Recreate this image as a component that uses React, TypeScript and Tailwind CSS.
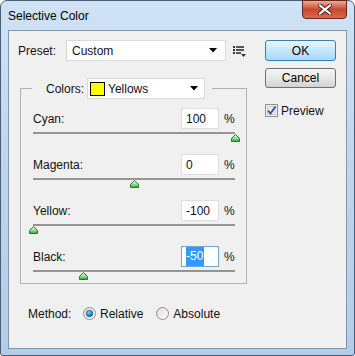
import React from "react";

const font = { fontFamily: '"Liberation Sans", Arial, sans-serif' };

type Row = { label: string; value: number; focused?: boolean };

const rows: Row[] = [
  { label: "Cyan:", value: 100 },
  { label: "Magenta:", value: 0 },
  { label: "Yellow:", value: -100 },
  { label: "Black:", value: -50, focused: true },
];

const Arrow = () => (
  <svg width="8" height="5" viewBox="0 0 8 5">
    <path d="M0 0 H8 L4 4.5 Z" fill="#000" />
  </svg>
);

const Thumb = () => (
  <svg width="9" height="8" viewBox="0 0 9 8">
    <defs>
      <linearGradient id="tg" x1="0" y1="0" x2="0" y2="1">
        <stop offset="0" stopColor="#f2fff2" />
        <stop offset="0.5" stopColor="#9fe09f" />
        <stop offset="1" stopColor="#2fa52f" />
      </linearGradient>
    </defs>
    <path d="M4.5 0.5 L8.5 4.5 V7.5 H0.5 V4.5 Z" fill="url(#tg)" stroke="#1d7a25" strokeWidth="1" />
  </svg>
);

const ListIcon = () => (
  <svg width="13" height="12" viewBox="0 0 13 12">
    <rect x="0" y="0" width="2" height="2" fill="#333" />
    <rect x="3" y="0" width="8" height="2" fill="#555" />
    <rect x="0" y="3" width="2" height="2" fill="#333" />
    <rect x="3" y="3" width="8" height="2" fill="#555" />
    <rect x="0" y="6" width="2" height="2" fill="#333" />
    <rect x="3" y="6" width="5" height="2" fill="#555" />
    <path d="M8 8 H13 L10.5 11 Z" fill="#333" />
  </svg>
);

const SliderRow = ({ row }: { row: Row }) => {
  const pct = ((row.value + 100) / 200) * 100;
  return (
    <div className="flex flex-col">
      <div className="flex items-center h-[21px]">
        <span className="flex-1">{row.label}</span>
        <div
          className={`w-[38px] h-[21px] bg-white border flex items-center pl-[4px] ${
            row.focused ? "border-[#6ea7dc]" : "border-[#dedede]"
          }`}
        >
          {row.focused ? (
            <span className="bg-[#3399ff] text-white h-[19px] leading-[19px] pr-[1px]">{row.value}</span>
          ) : (
            <span>{row.value}</span>
          )}
        </div>
        <span className="ml-[5px] w-[11px]">%</span>
      </div>
      <div className="relative mt-[3px] h-[2px] bg-[#949494]">
        <div className="absolute top-[2px] flex" style={{ left: `calc(${pct}% - 4.5px)` }}>
          <Thumb />
        </div>
      </div>
    </div>
  );
};

const Radio = ({ checked }: { checked?: boolean }) => (
  <svg width="13" height="13" viewBox="0 0 13 13">
    <defs>
      <linearGradient id="rb" x1="0" y1="0" x2="1" y2="1">
        <stop offset="0" stopColor="#dcdcdc" />
        <stop offset="1" stopColor="#ffffff" />
      </linearGradient>
      <radialGradient id="rd" cx="0.4" cy="0.35" r="0.7">
        <stop offset="0" stopColor="#7fd3f7" />
        <stop offset="0.6" stopColor="#1a86c8" />
        <stop offset="1" stopColor="#0b4f8c" />
      </radialGradient>
    </defs>
    <circle cx="6.5" cy="6.5" r="6" fill="url(#rb)" stroke="#8e8f8f" />
    {checked && <circle cx="6.5" cy="6.5" r="3.3" fill="url(#rd)" stroke="#1b5c8f" strokeWidth="0.6" />}
  </svg>
);

export default function App() {
  return (
    <div className="w-[355px] h-[356px] bg-white text-[12px] text-[#101018]" style={font}>
      <div className="w-full h-full flex flex-col border border-[#4b5d72] rounded-t-[7px] rounded-b-[3px] bg-gradient-to-b from-[#cfe2f6] via-[#bed5ee] to-[#b3cce8] px-[7px] pb-[6px]">
        {/* title bar */}
        <div className="h-[29px] flex justify-between items-start">
          <span className="self-center mt-[1px] text-black">Selective Color</span>
          <div className="w-[45px] h-[19px] -mt-[1px] rounded-b-[4px] border border-[#6b2418] bg-gradient-to-b from-[#e9a99a] via-[#c9462f] to-[#d96a4c] flex items-center justify-center">
            <svg width="14" height="11" viewBox="0 0 14 11">
              <path d="M2 1.5 L12 9.5 M12 1.5 L2 9.5" stroke="#3b1a14" strokeWidth="4" strokeLinecap="square" />
              <path d="M2 1.5 L12 9.5 M12 1.5 L2 9.5" stroke="#ffffff" strokeWidth="2.2" strokeLinecap="square" />
            </svg>
          </div>
        </div>

        {/* client area */}
        <div className="flex-1 bg-[#f0f0f0] border border-[#8196ad] flex flex-col">
          <div className="flex">
            <div className="pl-[9px] flex flex-col">
              <div className="mt-[9px] h-[21px] flex items-center">
                <span className="w-[48px]">Preset:</span>
                <div className="w-[160px] h-[21px] bg-white border border-[#dadada] flex items-center justify-between pl-[5px] pr-[8px]">
                  <span>Custom</span>
                  <Arrow />
                </div>
                <div className="ml-[7px] mt-[2px] flex">
                  <ListIcon />
                </div>
              </div>

              <fieldset className="mt-[17px] ml-[2px] w-[227px] border border-[#b2b2b2] pl-[12px] pr-[11px] pt-[9px] pb-[11px] flex flex-col gap-[20px]">
                <legend className="-ml-[1px] p-0">
                  <div className="flex items-center pl-[14px] pr-[7px]">
                    <span className="w-[41px]">Colors:</span>
                    <div className="w-[118px] h-[21px] bg-white border border-[#dadada] flex items-center pl-[2px] pr-[6px]">
                      <span className="w-[15px] h-[14px] bg-[#ffff00] border border-black" />
                      <span className="ml-[3px] flex-1">Yellows</span>
                      <Arrow />
                    </div>
                  </div>
                </legend>
                {rows.map((r) => (
                  <SliderRow key={r.label} row={r} />
                ))}
              </fieldset>
            </div>

            <div className="ml-[18px] flex flex-col">
              <button className="mt-[9px] w-[71px] h-[21px] rounded-[3px] border border-[#3c7fb1] bg-gradient-to-b from-[#eaf6fd] via-[#c4e8fd] to-[#a7d9f5] text-black">
                OK
              </button>
              <button className="mt-[7px] w-[71px] h-[20px] rounded-[3px] border border-[#707070] bg-gradient-to-b from-[#f4f4f4] via-[#e8e8e8] to-[#d2d2d2] text-black">
                Cancel
              </button>
              <label className="mt-[15px] flex items-center h-[15px]">
                <svg width="13" height="13" viewBox="0 0 13 13">
                  <rect x="0.5" y="0.5" width="12" height="12" fill="#f4f4f4" stroke="#8e8f8f" />
                  <rect x="2.5" y="2.5" width="8" height="8" fill="#e6ecf5" stroke="#c4ccd8" />
                  <path d="M3 6.5 L5.5 9.5 L10.5 2.5" fill="none" stroke="#3c4e8e" strokeWidth="1.8" />
                </svg>
                <span className="ml-[3px]">Preview</span>
              </label>
            </div>
          </div>

          <div className="mt-[22px] ml-[19px] h-[15px] flex items-center">
            <span className="w-[55px]">Method:</span>
            <Radio checked />
            <span className="ml-[4px]">Relative</span>
            <span className="ml-[13px] flex">
              <Radio />
            </span>
            <span className="ml-[4px]">Absolute</span>
          </div>
        </div>
      </div>
    </div>
  );
}
